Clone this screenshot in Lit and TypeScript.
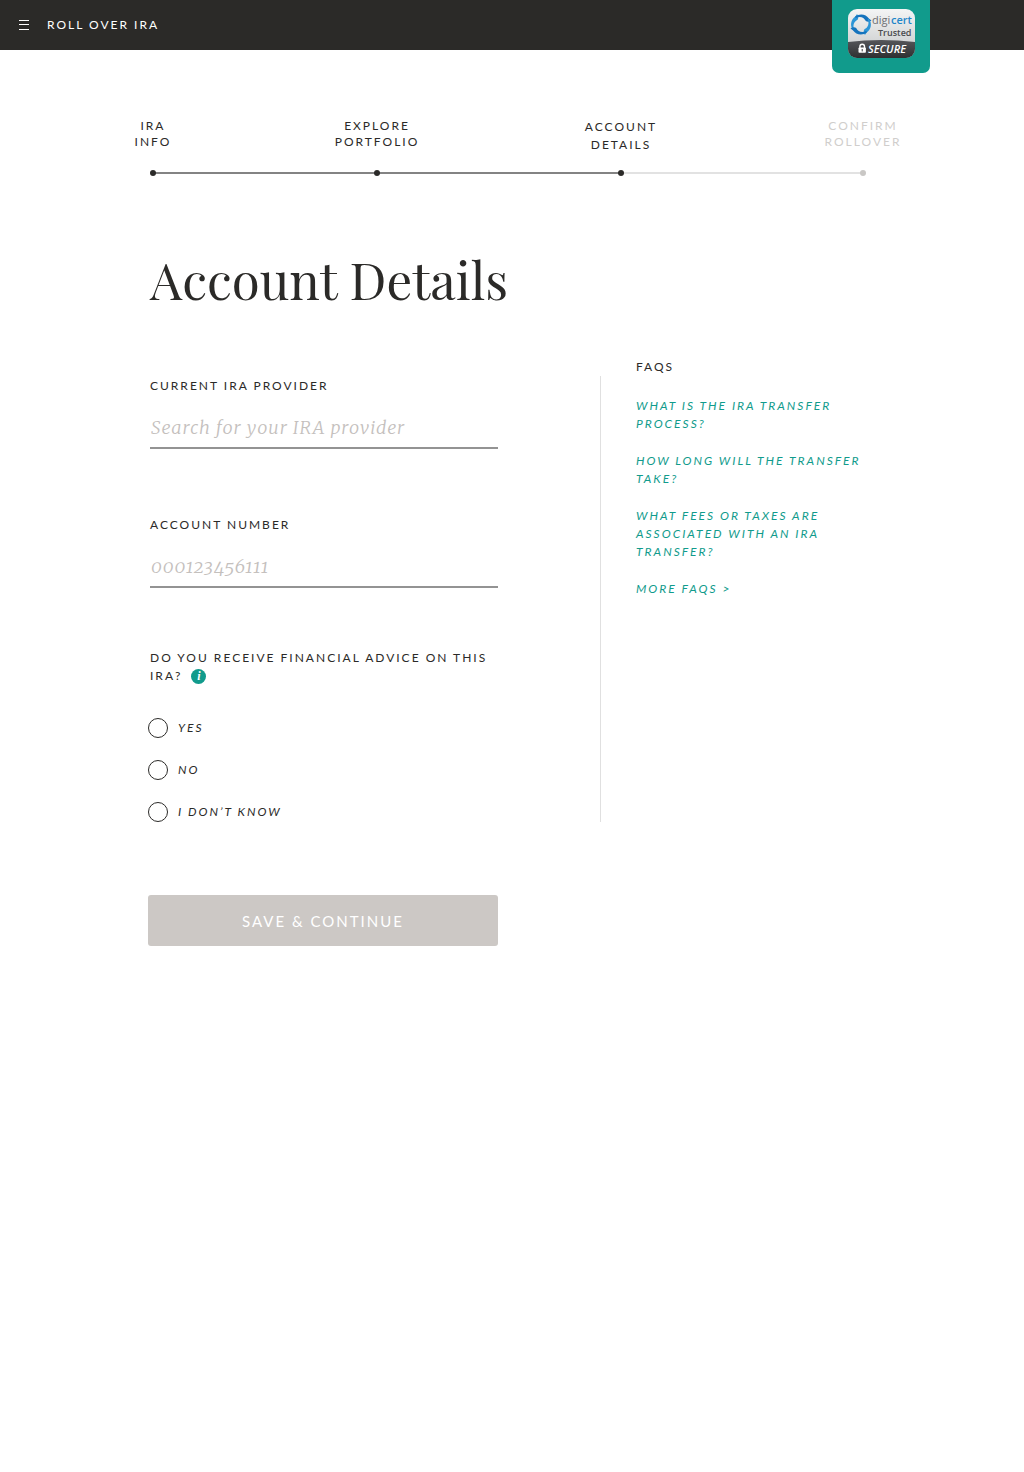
import { LitElement, html, css, svg } from "lit";
import { customElement, state } from "lit/decorators.js";

interface Step {
  lines: [string, string];
  status: "done" | "current" | "upcoming";
}

const STEPS: Step[] = [
  { lines: ["IRA", "INFO"], status: "done" },
  { lines: ["EXPLORE", "PORTFOLIO"], status: "done" },
  { lines: ["ACCOUNT", "DETAILS"], status: "current" },
  { lines: ["CONFIRM", "ROLLOVER"], status: "upcoming" },
];

const FAQS = [
  "WHAT IS THE IRA TRANSFER PROCESS?",
  "HOW LONG WILL THE TRANSFER TAKE?",
  "WHAT FEES OR TAXES ARE ASSOCIATED WITH AN IRA TRANSFER?",
  "MORE FAQS >",
];

const ADVICE_OPTIONS = [
  { value: "yes", label: "YES" },
  { value: "no", label: "NO" },
  { value: "unknown", label: "I DON’T KNOW" },
];

@customElement("trust-seal")
export class TrustSeal extends LitElement {
  static styles = css`
    :host {
      display: block;
      box-sizing: border-box;
      width: 98px;
      height: 73px;
      padding: 9px 15px 0 16px;
      background: #119b8c;
      border-radius: 0 0 7px 7px;
      letter-spacing: normal;
    }
    .seal {
      display: block;
      width: 67px;
      height: 49px;
    }
    .word {
      font-family: "Open Sans", "Noto Sans", sans-serif;
    }
  `;

  render() {
    return html`
      <svg class="seal" viewBox="0 0 67 49" role="img" aria-label="digicert Trusted SECURE">
        <defs>
          <linearGradient id="face" x1="0" y1="0" x2="0" y2="1">
            <stop offset="0" stop-color="#f4f5f5"></stop>
            <stop offset="1" stop-color="#c4c6c7"></stop>
          </linearGradient>
          <linearGradient id="base" x1="0" y1="0" x2="0" y2="1">
            <stop offset="0" stop-color="#55565a"></stop>
            <stop offset="1" stop-color="#2e2f31"></stop>
          </linearGradient>
          <clipPath id="shape"><rect width="67" height="49" rx="9"></rect></clipPath>
        </defs>
        <g clip-path="url(#shape)">
          <rect width="67" height="49" fill="url(#face)"></rect>
          <path d="M0 33 Q33 29 67 33 V49 H0 Z" fill="url(#base)"></path>
        </g>
        ${[-35, 55, 145, 235].map(
          (angle) => svg`
            <path
              transform=${`rotate(${angle} 13 15.5)`}
              d="M3.2 16 C3 9.8 7.5 5.6 13 5.6 L15.8 4.6 C15.8 6.8 15 8.8 13 9.6 C9 9 5.6 11 4.6 16 Z"
              fill=${angle === 55 || angle === 235 ? "#1573bd" : "#2c95d6"}
            ></path>`,
        )}
        <text class="word" x="24" y="15" font-size="11" fill="#6d6e71">digi</text>
        <text class="word" x="43" y="15" font-size="11" font-weight="600" fill="#1f86c9">cert</text>
        <text class="word" x="30" y="27" font-size="9" font-weight="600" fill="#4a4b4e">Trusted</text>
        <path d="M11.9 39.5 V37.6 a2.3 2.3 0 0 1 4.6 0 V39.5" fill="none" stroke="#ffffff" stroke-width="1.4"></path>
        <rect x="10.5" y="38.4" width="7.4" height="5.4" rx="0.8" fill="#ffffff"></rect>
        <rect x="13.7" y="40" width="1" height="2.4" fill="#3a3b3e"></rect>
        <text class="word" x="20" y="43.5" font-size="11" font-weight="600" font-style="italic" fill="#ffffff">SECURE</text>
      </svg>
    `;
  }
}

@customElement("step-progress")
export class StepProgress extends LitElement {
  static styles = css`
    :host {
      display: block;
    }
    .steps {
      display: grid;
      grid-template-columns: 224fr 244fr 242fr 0;
      margin: 0;
      padding: 0;
      list-style: none;
    }
    .label {
      width: 120px;
      height: 36px;
      margin: 0 0 16px -60px;
      text-align: center;
      line-height: 16px;
    }
    .line {
      display: block;
    }
    .track {
      position: relative;
      height: 6px;
    }
    .track::before {
      content: "";
      position: absolute;
      top: 2px;
      left: 0;
      right: 0;
      height: 2px;
      background: #838383;
    }
    .track::after {
      content: "";
      position: absolute;
      top: 0;
      left: -3px;
      width: 6px;
      height: 6px;
      border-radius: 50%;
      background: #2b2a28;
    }
    .current .label {
      line-height: 18px;
    }
    .current .track::before {
      background: #e2e2e2;
    }
    .upcoming {
      color: #d0cecc;
    }
    .upcoming .track::after {
      background: #c9c7c5;
    }
  `;

  render() {
    return html`
      <ol class="steps">
        ${STEPS.map(
          (step) => html`
            <li class=${step.status} aria-current=${step.status === "current" ? "step" : "false"}>
              <div class="label">
                ${step.lines.map((line) => html`<span class="line">${line}</span>`)}
              </div>
              <div class="track"></div>
            </li>
          `,
        )}
      </ol>
    `;
  }
}

@customElement("app-root")
export class AppRoot extends LitElement {
  @state() private advice = "";

  static styles = css`
    :host {
      display: block;
      min-height: 100vh;
      background: #ffffff;
      color: #2b2a28;
      font-family: Lato, "Liberation Sans", sans-serif;
      font-size: 12px;
      line-height: 18px;
      letter-spacing: 2px;
    }
    .bar {
      position: relative;
      display: flex;
      align-items: center;
      gap: 17px;
      height: 50px;
      padding: 0 18px;
      background: #2b2a28;
      color: #ffffff;
    }
    .menu {
      display: block;
      width: 12px;
      height: 12px;
      padding: 0;
      border: 0;
      background: none;
      color: inherit;
      cursor: pointer;
    }
    .menu-icon {
      display: block;
      width: 12px;
      height: 12px;
    }
    .seal {
      position: absolute;
      top: 0;
      right: 94px;
    }
    .progress {
      margin: 68px 161px 0 153px;
    }
    .main {
      padding: 71px 148px 80px;
    }
    .title {
      margin: 0 0 47px;
      padding-left: 2px;
      font-family: "Playfair Display", "Liberation Serif", serif;
      font-size: 51px;
      font-weight: 400;
      line-height: 64px;
      letter-spacing: normal;
    }
    .form {
      display: grid;
      grid-template-columns: 350fr auto 240fr;
    }
    .fields {
      padding-top: 19px;
    }
    .field {
      display: flex;
      flex-direction: column;
      gap: 12px;
      padding-left: 2px;
      margin-bottom: 67px;
    }
    .field:last-of-type {
      margin-bottom: 61px;
    }
    .input {
      box-sizing: border-box;
      width: 100%;
      height: 42px;
      padding: 0 1px;
      border: 0;
      border-bottom: 2px solid #939393;
      border-radius: 0;
      background: none;
      color: #2b2a28;
      font-family: Merriweather, "Liberation Serif", serif;
      font-size: 18px;
      font-style: italic;
      font-weight: 300;
      font-variant-numeric: oldstyle-nums;
      letter-spacing: 1px;
      outline-offset: 4px;
    }
    .input::placeholder {
      color: #c4c0bd;
      opacity: 1;
    }
    .choices {
      min-width: 0;
      margin: 0;
      padding: 0;
      border: 0;
    }
    .legend {
      padding: 0 0 33px 2px;
    }
    .info {
      width: 15px;
      height: 15px;
      margin: 0 0 0 4px;
      padding: 0;
      border: 0;
      border-radius: 50%;
      background: #119b8c;
      color: #ffffff;
      font-family: "Liberation Serif", serif;
      font-size: 12px;
      font-style: italic;
      font-weight: 700;
      letter-spacing: normal;
      line-height: 15px;
      text-align: center;
      vertical-align: middle;
      cursor: pointer;
    }
    .options {
      display: flex;
      flex-direction: column;
      gap: 22px;
    }
    .option {
      display: flex;
      align-items: center;
      gap: 10px;
      height: 20px;
      font-style: italic;
      cursor: pointer;
    }
    .radio {
      appearance: none;
      box-sizing: border-box;
      width: 20px;
      height: 20px;
      margin: 0;
      border: 1px solid #2b2a28;
      border-radius: 50%;
      cursor: pointer;
    }
    .radio:checked {
      background: radial-gradient(#119b8c 0 5px, transparent 6px);
    }
    .divider {
      width: 1px;
      margin: 18px 35px 0 102px;
      background: #e0e0e0;
    }
    .faq-title {
      margin: 0 0 21px;
      font-size: 12px;
      font-weight: 400;
    }
    .faq-list {
      display: flex;
      flex-direction: column;
      gap: 19px;
      margin: 0;
      padding: 0;
      list-style: none;
    }
    .faq-link {
      color: #119b8c;
      font-style: italic;
      text-decoration: none;
    }
    .faq-link:hover {
      text-decoration: underline;
    }
    .submit {
      grid-column: 1;
      height: 51px;
      margin-top: 73px;
      padding: 0;
      border: 0;
      border-radius: 3px;
      background: #ccc8c5;
      color: #ffffff;
      font-family: inherit;
      font-size: 15px;
      letter-spacing: 2px;
      cursor: pointer;
    }
  `;

  private onAdvice(value: string) {
    this.advice = value;
  }

  render() {
    return html`
      <header class="bar">
        <button class="menu" type="button" aria-label="Menu">
          <svg class="menu-icon" viewBox="0 0 12 12" aria-hidden="true">
            <path d="M1 1.5H11M1 5.5H11M1 10.5H11" stroke="currentColor" stroke-width="1.2"></path>
          </svg>
        </button>
        <span>ROLL OVER IRA</span>
        <trust-seal class="seal"></trust-seal>
      </header>
      <step-progress class="progress"></step-progress>
      <main class="main">
        <h1 class="title">Account Details</h1>
        <form class="form" @submit=${(e: Event) => e.preventDefault()}>
          <div class="fields">
            <div class="field">
              <label for="provider">CURRENT IRA PROVIDER</label>
              <input class="input" id="provider" type="text" placeholder="Search for your IRA provider" />
            </div>
            <div class="field">
              <label for="account">ACCOUNT NUMBER</label>
              <input class="input" id="account" type="text" inputmode="numeric" placeholder="000123456111" />
            </div>
            <fieldset class="choices">
              <legend class="legend">
                DO YOU RECEIVE FINANCIAL ADVICE ON THIS IRA?
                <button class="info" type="button" aria-label="About financial advice">i</button>
              </legend>
              <div class="options">
                ${ADVICE_OPTIONS.map(
                  (option) => html`
                    <label class="option">
                      <input
                        class="radio"
                        type="radio"
                        name="advice"
                        value=${option.value}
                        .checked=${this.advice === option.value}
                        @change=${() => this.onAdvice(option.value)}
                      />
                      <span>${option.label}</span>
                    </label>
                  `,
                )}
              </div>
            </fieldset>
          </div>
          <div class="divider"></div>
          <aside>
            <h2 class="faq-title">FAQS</h2>
            <ul class="faq-list">
              ${FAQS.map((question) => html`<li><a class="faq-link" href="#faq">${question}</a></li>`)}
            </ul>
          </aside>
          <button class="submit" type="submit">SAVE &amp; CONTINUE</button>
        </form>
      </main>
    `;
  }
}
